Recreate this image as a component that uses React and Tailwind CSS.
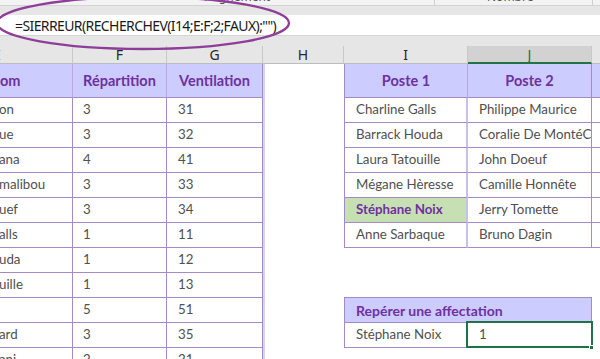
const leftRows = [
  ["on", "3", "31"],
  ["ue", "3", "32"],
  ["ana", "4", "41"],
  ["malibou", "3", "33"],
  ["uef", "3", "34"],
  ["alls", "1", "11"],
  ["uda", "1", "12"],
  ["uille", "1", "13"],
  ["", "5", "51"],
  ["ard", "3", "35"],
  ["ani", "2", "21"],
];

const rightRows = [
  ["Charline Galls", "Philippe Maurice"],
  ["Barrack Houda", "Coralie De MontéCarlo"],
  ["Laura Tatouille", "John Doeuf"],
  ["Mégane Hèresse", "Camille Honnête"],
  ["Stéphane Noix", "Jerry Tomette"],
  ["Anne Sarbaque", "Bruno Dagin"],
];

function LeftCells({ r }) {
  return (
    <>
      <div className="w-[73px] shrink-0 border-b border-r border-[#a68ac6] flex items-center overflow-hidden whitespace-nowrap">
        <span className="-ml-[1px]">{r[0]}</span>
      </div>
      <div className="w-[94px] shrink-0 border-b border-r border-[#a68ac6] flex items-center pl-[10px]">{r[1]}</div>
      <div className="w-[96px] shrink-0 border-b border-r border-[#a68ac6] flex items-center pl-[11px]">{r[2]}</div>
    </>
  );
}

function RightCells({ i }) {
  if (i <= 6) {
    const r = rightRows[i - 1];
    const green = i === 5;
    return (
      <>
        <div
          className={
            "w-[124px] shrink-0 border-l border-b border-r-2 border-l-[#a68ac6] border-b-[#a68ac6] border-r-[#c9bfeb] flex items-center pl-[11px] whitespace-nowrap overflow-hidden " +
            (green ? "bg-[#c6e0b4] font-bold text-[#7030a0]" : "")
          }
        >
          {r[0]}
        </div>
        <div className="w-[124px] shrink-0 border-b border-r border-[#a68ac6] flex items-center pl-[11px] whitespace-nowrap overflow-hidden">
          {r[1]}
        </div>
        <div className="flex-1 border-b border-[#a68ac6]" />
      </>
    );
  }
  if (i === 7) {
    return <div className="flex-1" />;
  }
  if (i === 8) {
    return (
      <>
        <div className="w-[248px] shrink-0 border-b border-[#a68ac6]" />
        <div className="flex-1" />
      </>
    );
  }
  if (i === 9) {
    return (
      <>
        <div className="w-[248px] shrink-0 border-l border-b border-r border-[#a68ac6] bg-[#ccccff] flex items-center pl-[11px] font-bold text-[#7030a0] text-[14px]">
          Repérer une affectation
        </div>
        <div className="flex-1" />
      </>
    );
  }
  if (i === 10) {
    return (
      <>
        <div className="w-[124px] shrink-0 border-l border-b border-r border-[#a68ac6] flex items-center pl-[11px]">
          Stéphane Noix
        </div>
        <div className="relative w-[124px] shrink-0 border-b border-r border-[#a68ac6] flex items-center pl-[11px]">
          1
          <div className="absolute -left-[2px] -top-[2px] -right-[2px] -bottom-[1px] border-2 border-[#217346]" />
          <div className="absolute -right-[3px] -bottom-[3px] w-[5px] h-[5px] bg-[#217346] border border-white" />
        </div>
        <div className="flex-1" />
      </>
    );
  }
  return <div className="flex-1" />;
}

function ColHead({ w, label, sel }) {
  return (
    <div
      className={
        w +
        " shrink-0 h-full flex items-center justify-center border-r border-[#c8c8c8] " +
        (sel
          ? "bg-[#d2d2d2] text-[#217346] border-b-2 border-b-[#217346]"
          : "border-b border-b-[#bdbdbd]")
      }
    >
      {label}
    </div>
  );
}

export default function App() {
  return (
    <div className="relative w-[600px] h-[359px] overflow-hidden bg-white font-['Lato',sans-serif]">
      {/* ribbon remnant */}
      <div className="flex h-[6px] bg-[#f3f3f3] border-b border-[#d4d4d4] overflow-hidden text-[12px] leading-[14px] text-[#555] font-['Noto_Sans',sans-serif]">
        <div className="w-[435px] shrink-0 border-r border-[#d0d0d0] pl-[205px]">
          <div className="-mt-[10px] whitespace-nowrap">Alignement</div>
        </div>
        <div className="w-[158px] shrink-0 border-r border-[#d0d0d0] pl-[52px]">
          <div className="-mt-[10px] whitespace-nowrap">Nombre</div>
        </div>
        <div className="flex-1" />
      </div>
      <div className="h-[9px] bg-[#e6e6e6]" />
      {/* formula bar */}
      <div className="h-[21px] bg-white border-b border-[#d4d4d4] flex items-center pl-[15px] text-[14px] text-[#1a1a1a] font-['Noto_Sans',sans-serif] tracking-[-0.6px] whitespace-nowrap">
        =SIERREUR(RECHERCHEV(I14;E:F;2;FAUX);"")
      </div>
      <div className="h-[10px] bg-[#e6e6e6]" />
      {/* column headers */}
      <div className="flex h-[18px] bg-[#e6e6e6] text-[14px] text-[#262626] font-['Noto_Sans',sans-serif] overflow-hidden">
        <div className="w-[73px] shrink-0 h-full flex items-center border-r border-[#c8c8c8] border-b border-b-[#bdbdbd] overflow-hidden">
          <span className="-ml-[7px]">E</span>
        </div>
        <ColHead w="w-[94px]" label="F" />
        <ColHead w="w-[96px]" label="G" />
        <ColHead w="w-[81px]" label="H" />
        <ColHead w="w-[124px]" label="I" />
        <ColHead w="w-[124px]" label="J" sel />
        <div className="flex-1 h-full border-b border-b-[#bdbdbd]" />
      </div>
      {/* header row */}
      <div className="flex h-[34px] text-[14.5px] font-bold text-[#7030a0]">
        <div className="w-[73px] shrink-0 bg-[#ccccff] border-b border-r border-b-[#a68ac6] border-r-[#b8a8e0] flex items-center">
          <span>om</span>
        </div>
        <div className="w-[94px] shrink-0 bg-[#ccccff] border-b border-r border-b-[#a68ac6] border-r-[#b8a8e0] flex items-center justify-center">
          Répartition
        </div>
        <div className="w-[96px] shrink-0 bg-[#ccccff] border-b border-r border-[#a68ac6] flex items-center justify-center">
          Ventilation
        </div>
        <div className="w-[81px] shrink-0 border-l-2 border-[#d9d0f5]" />
        <div className="w-[124px] shrink-0 bg-[#ccccff] border-l border-b border-r border-l-[#a68ac6] border-b-[#a68ac6] border-r-[#b8a8e0] flex items-center justify-center">
          Poste 1
        </div>
        <div className="w-[124px] shrink-0 bg-[#ccccff] border-b border-r border-[#a68ac6] flex items-center justify-center">
          Poste 2
        </div>
        <div className="flex-1 bg-[#ccccff] border-b border-[#a68ac6]" />
      </div>
      {/* data rows */}
      {leftRows.map((r, idx) => (
        <div key={idx} className="flex h-[25px] text-[13.3px] text-[#505050]">
          <LeftCells r={r} />
          <div className="w-[81px] shrink-0 border-l-2 border-[#d9d0f5]" />
          <RightCells i={idx + 1} />
        </div>
      ))}
      {/* highlight ellipse around formula */}
      <svg className="absolute left-0 top-0" width="300" height="60" viewBox="0 0 300 60">
        <ellipse cx="143" cy="23" rx="146" ry="26" fill="none" stroke="#8e3d99" strokeWidth="2.3" />
      </svg>
    </div>
  );
}
